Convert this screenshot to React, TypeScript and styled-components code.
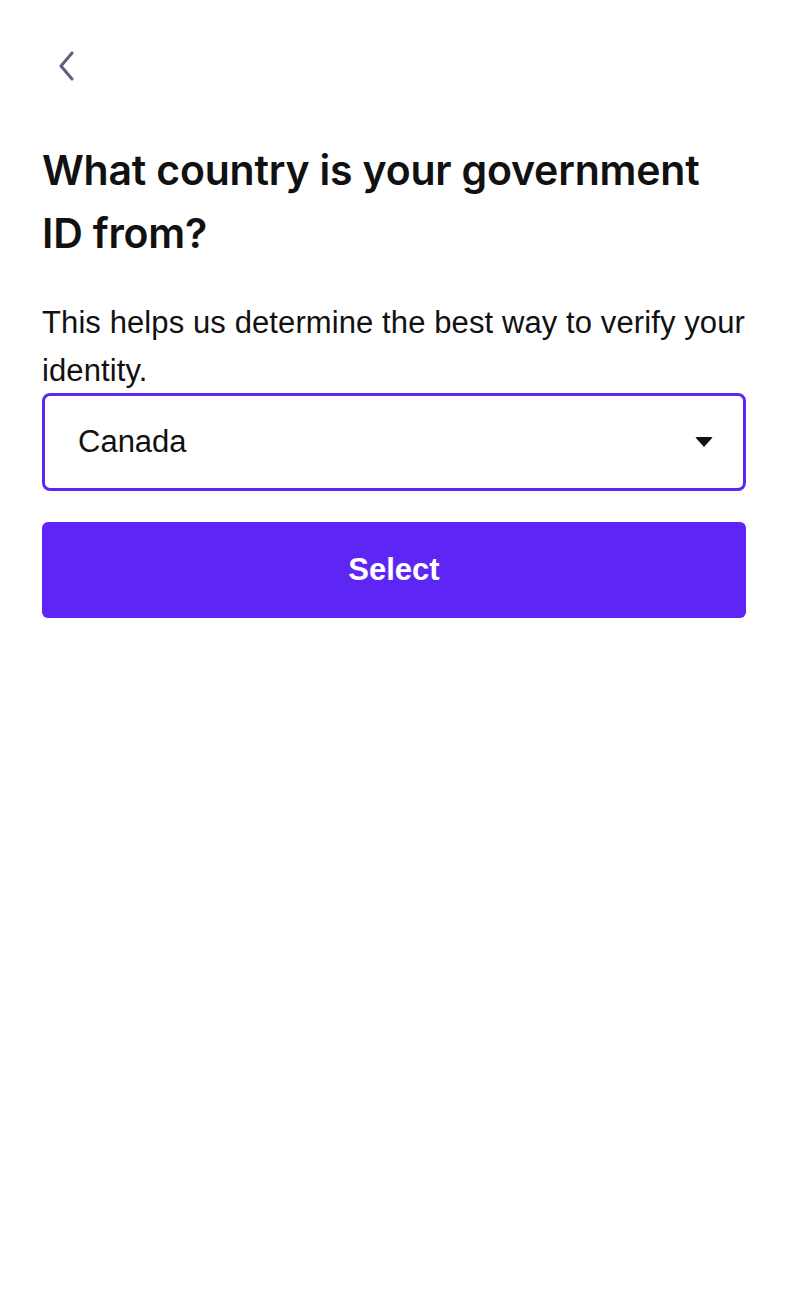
import React from "react";
import styled, { createGlobalStyle } from "styled-components";

const Global = createGlobalStyle`
  html, body { margin: 0; padding: 0; background: #ffffff; }
  body { font-family: Inter, "Liberation Sans", Arial, sans-serif; color: #111111; }
`;

const Page = styled.div`
  width: 786px;
  min-height: 1290px;
  box-sizing: border-box;
  padding: 48px 40px 0 42px;
  display: flex;
  flex-direction: column;
`;

const BackButton = styled.button`
  width: 36px;
  height: 36px;
  margin-left: 7px;
  padding: 0;
  border: none;
  background: transparent;
  display: flex;
  align-items: center;
  justify-content: center;
  cursor: pointer;
`;

const Title = styled.h1`
  margin: 55px 0 0 0;
  max-width: 680px;
  font-family: Inter, "Liberation Sans", sans-serif;
  font-weight: 600;
  font-size: 41px;
  line-height: 63px;
  letter-spacing: -0.2px;
  color: #111111;
`;

const Subtitle = styled.p`
  margin: 34px 0 0 0;
  font-family: "Liberation Sans", Arial, sans-serif;
  font-size: 31px;
  line-height: 48px;
  letter-spacing: 0.1px;
  color: #111111;
`;

const SelectBox = styled.div`
  margin-top: -2px;
  height: 98px;
  box-sizing: border-box;
  border: 3px solid #5e26f5;
  border-radius: 8px;
  display: flex;
  align-items: center;
  justify-content: space-between;
  padding: 0 30px 0 33px;
  font-family: "Liberation Sans", Arial, sans-serif;
  font-size: 31px;
  color: #111111;
`;

const Caret = styled.span`
  width: 0;
  height: 0;
  border-left: 9px solid transparent;
  border-right: 9px solid transparent;
  border-top: 10px solid #111111;
  border-radius: 2px;
`;

const PrimaryButton = styled.button`
  margin-top: 31px;
  height: 96px;
  border: none;
  border-radius: 6px;
  background: #5e26f5;
  color: #ffffff;
  font-family: "Liberation Sans", Arial, sans-serif;
  font-weight: 700;
  font-size: 31px;
  cursor: pointer;
`;

export default function App() {
  return (
    <>
      <Global />
      <Page>
        <BackButton aria-label="Back">
          <svg width="20" height="30" viewBox="0 0 20 30" fill="none">
            <path d="M15 2 L4 15 L15 28" stroke="#5f5f7e" strokeWidth="3" strokeLinecap="round" strokeLinejoin="round" />
          </svg>
        </BackButton>
        <Title>What country is your government ID from?</Title>
        <Subtitle>This helps us determine the best way to verify your identity.</Subtitle>
        <SelectBox>
          <span>Canada</span>
          <Caret />
        </SelectBox>
        <PrimaryButton>Select</PrimaryButton>
      </Page>
    </>
  );
}
